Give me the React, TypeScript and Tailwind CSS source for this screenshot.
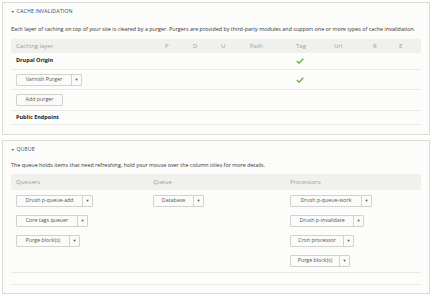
import React from "react";

const font = { fontFamily: '"Open Sans", "Noto Sans", sans-serif' };

function Check() {
  return (
    <svg width="8" height="6" viewBox="0 0 8 6" className="block">
      <polyline points="0.8,3 3,5.2 7.3,0.8" fill="none" stroke="#6aa84f" strokeWidth="1.3" />
    </svg>
  );
}

function DropButton({ label, w }: { label: string; w: string }) {
  return (
    <div className={`flex h-[12px] items-stretch rounded-[1px] border border-[#d2d2cc] bg-[#fbfbf9] ${w}`}>
      <div className="flex flex-1 items-center justify-center text-[5.3px] leading-none text-[#555]">{label}</div>
      <div className="flex w-[10px] items-center justify-center border-l border-[#d2d2cc] text-[4px] leading-none text-[#555]">▼</div>
    </div>
  );
}

function PlainButton({ label, w }: { label: string; w: string }) {
  return (
    <div className={`flex h-[12px] items-center justify-center rounded-[1px] border border-[#d2d2cc] bg-[#fbfbf9] text-[5.3px] leading-none text-[#555] ${w}`}>
      {label}
    </div>
  );
}

const cols1 = [
  { k: "layer", label: "Caching layer", w: "w-[149px]" },
  { k: "p", label: "P", w: "w-[28px]" },
  { k: "d", label: "D", w: "w-[28px]" },
  { k: "u", label: "U", w: "w-[29px]" },
  { k: "path", label: "Path", w: "w-[46px]" },
  { k: "tag", label: "Tag", w: "w-[38px]" },
  { k: "url", label: "Url", w: "w-[39px]" },
  { k: "r", label: "R", w: "w-[26px]" },
  { k: "e", label: "E", w: "flex-1" },
];

function Row1({ first, tag, h, last }: { first: React.ReactNode; tag?: boolean; h: string; last?: boolean }) {
  return (
    <div className={`flex ${h} items-center leading-none ${last ? "" : "border-b border-[#e8e8e4]"}`}>
      <div className="flex w-[149px] items-center pl-[5px]">{first}</div>
      <div className="w-[28px]" />
      <div className="w-[28px]" />
      <div className="w-[29px]" />
      <div className="w-[46px]" />
      <div className="flex w-[38px] items-center pl-[5px]">{tag ? <Check /> : null}</div>
      <div className="flex-1" />
    </div>
  );
}

export default function App() {
  return (
    <div className="h-[296px] w-[432px] bg-white p-[2px] text-[#333]" style={font}>
      {/* Cache invalidation */}
      <div className="h-[133px] w-[428px] border border-[#dcdcd6] bg-[#fcfcfa] px-[8px]">
        <div className="flex h-[17px] items-center pt-[1px] text-[5.3px] uppercase leading-none tracking-[0.1px] text-[#1f4f7a]">
          <span className="mr-[2px] text-[3.5px]">▼</span>
          <span>Cache invalidation</span>
        </div>
        <div className="flex h-[19px] items-center whitespace-nowrap text-[5.4px] leading-none text-[#333]">
          Each layer of caching on top of your site is cleared by a purger. Purgers are provided by third-party modules and support one or more types of cache invalidation.
        </div>
        <div>
          <div className="flex h-[14px] items-center bg-[#f0f0ec] text-[6px] leading-none text-[#a0a09a]">
            {cols1.map((c) => (
              <div key={c.k} className={`${c.w} pl-[5px]`}>{c.label}</div>
            ))}
          </div>
          <Row1 h="h-[17px]" tag first={<span className="text-[5.5px] font-bold leading-none text-[#222]">Drupal Origin</span>} />
          <Row1 h="h-[20px]" tag first={<DropButton label="Varnish Purger" w="w-[66px]" />} />
          <Row1 h="h-[21px]" first={<PlainButton label="Add purger" w="w-[47px]" />} />
          <Row1 h="h-[14px]" first={<span className="text-[5.5px] font-bold leading-none text-[#222]">Public Endpoint</span>} />
        </div>
      </div>

      {/* Queue */}
      <div className="mt-[5px] h-[154px] w-[428px] border border-[#dcdcd6] bg-[#fcfcfa] px-[8px]">
        <div className="flex h-[16px] items-center pt-[1px] text-[5.3px] uppercase leading-none tracking-[0.1px] text-[#1f4f7a]">
          <span className="mr-[2px] text-[3.5px]">▼</span>
          <span>Queue</span>
        </div>
        <div className="flex h-[17px] items-center whitespace-nowrap text-[5.4px] leading-none text-[#333]">
          The queue holds items that need refreshing, hold your mouse over the column titles for more details.
        </div>
        <div>
          <div className="flex h-[16px] items-center bg-[#f0f0ec] text-[6px] leading-none text-[#a0a09a]">
            <div className="w-[137px] pl-[5px]">Queuers</div>
            <div className="w-[137px] pl-[5px]">Queue</div>
            <div className="flex-1 pl-[5px]">Processors</div>
          </div>
          <div className="flex border-b border-[#e8e8e4]">
            <div className="flex w-[137px] flex-col gap-[8px] pl-[5px] pt-[5px]">
              <DropButton label="Drush p-queue-add" w="w-[77px]" />
              <DropButton label="Core tags queuer" w="w-[72px]" />
              <DropButton label="Purge block(s)" w="w-[64px]" />
            </div>
            <div className="flex w-[137px] flex-col gap-[8px] pl-[5px] pt-[5px]">
              <DropButton label="Database" w="w-[51px]" />
            </div>
            <div className="flex flex-1 flex-col gap-[8px] pb-[5px] pl-[5px] pt-[5px]">
              <DropButton label="Drush p-queue-work" w="w-[82px]" />
              <DropButton label="Drush p-invalidate" w="w-[74px]" />
              <DropButton label="Cron processor" w="w-[64px]" />
              <DropButton label="Purge block(s)" w="w-[60px]" />
            </div>
          </div>
          <div className="h-[12px] border-b border-[#e8e8e4]" />
        </div>
      </div>
    </div>
  );
}
